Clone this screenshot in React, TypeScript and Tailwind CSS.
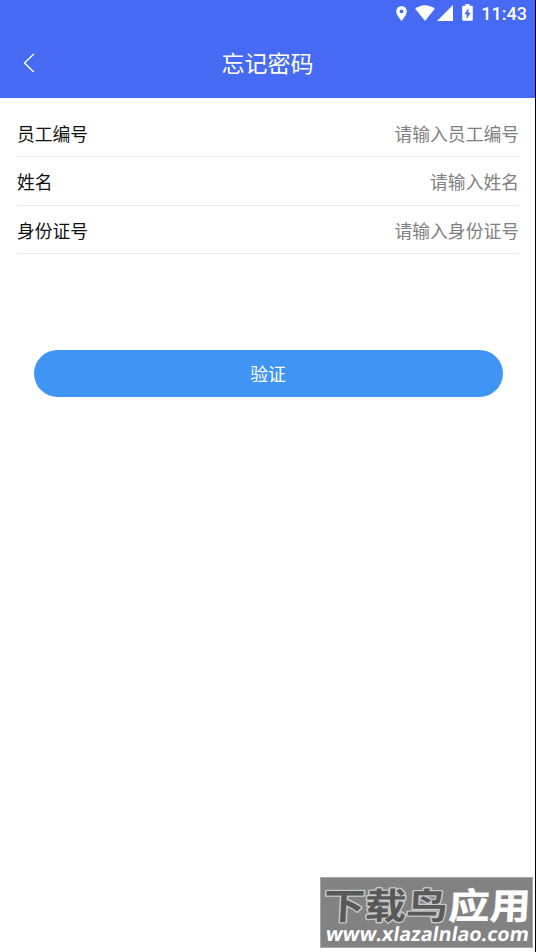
const fields = [
  { name: "employeeNo", label: "员工编号", placeholder: "请输入员工编号" },
  { name: "fullName", label: "姓名", placeholder: "请输入姓名" },
  { name: "idNumber", label: "身份证号", placeholder: "请输入身份证号" },
]

function StatusBar() {
  return (
    <div className="flex h-7 items-start justify-end pr-2 text-white">
      <svg className="mt-[6px] h-[15px] w-[11px]" viewBox="0 0 11 15" fill="currentColor">
        <path
          fillRule="evenodd"
          d="M5.5 0A5.3 5.3 0 0 0 .2 5.3C.2 9.2 5.5 15 5.5 15s5.3-5.8 5.3-9.7A5.3 5.3 0 0 0 5.5 0Zm0 3.4a1.9 1.9 0 1 1 0 3.8 1.9 1.9 0 0 1 0-3.8Z"
        />
      </svg>
      <svg className="mt-[5px] ml-2 h-4 w-5" viewBox="0 0 20 16" fill="currentColor">
        <path d="M10 16 19.8 3.7C17 1.5 13.6.3 10 .3S3 1.500.2 3.700Z" />
      </svg>
      <svg className="mt-[5px] ml-0.5 h-4 w-4" viewBox="0 0 16 16" fill="currentColor">
        <path d="M0 16 16 0v16Z" />
      </svg>
      <svg className="mt-1 ml-[9px] h-[17px] w-[11px]" viewBox="0 0 11 17" fill="currentColor">
        <path
          fillRule="evenodd"
          d="M3.500 0h4v1.700h2.300q1 0 1 1v13.100q0 1-1 1H1.200q-1 0-1-1V2.700q0-1 1-1h2.300ZM6.400 4 2.500 10.300h2.200V15l3.900-6.300H6.400Z"
        />
      </svg>
      <span className="mt-[3px] ml-2 font-['Roboto',sans-serif] text-[18px] leading-[21px] font-medium">11:43</span>
    </div>
  )
}

function Watermark() {
  return (
    <div className="absolute top-[877px] left-[320px] h-[71px] w-[213px] border border-[#a8a8a8] bg-[#828282]">
      <svg className="block h-full w-full overflow-visible" viewBox="0 0 211 69">
        <g
          fontFamily="'Noto Sans CJK SC', sans-serif"
          fontSize="40"
          fontWeight="700"
          strokeLinejoin="round"
          paintOrder="stroke"
          transform="translate(2 41) skewX(-3) scale(1 0.9)"
        >
          <text
            x="0"
            y="0"
            textLength="124"
            lengthAdjust="spacingAndGlyphs"
            fill="#595959"
            stroke="#c8c8c8"
            strokeWidth="3"
          >
            下载鸟
          </text>
          <text
            x="125"
            y="0"
            textLength="82"
            lengthAdjust="spacingAndGlyphs"
            fill="#ffffff"
            stroke="#ffffff"
            strokeWidth="0.5"
          >
            应用
          </text>
        </g>
        <text
          x="0"
          y="0"
          transform="translate(4 63) skewX(-9)"
          textLength="203"
          lengthAdjust="spacingAndGlyphs"
          fontFamily="'Open Sans', sans-serif"
          fontSize="19.5"
          fontWeight="700"
          fill="#ffffff"
        >
          www.xlazalnlao.com
        </text>
      </svg>
    </div>
  )
}

export default function App() {
  return (
    <main className="relative h-[952px] w-[536px] overflow-hidden border-r border-black bg-white font-['Noto_Sans_CJK_SC',sans-serif]">
      <header className="h-[98px] bg-[#466af3] text-white">
        <StatusBar />
        <div className="grid h-[70px] grid-cols-[60px_1fr_60px] items-center">
          <button type="button" aria-label="返回" className="pl-[23px]">
            <svg className="block h-5 w-3" viewBox="0 0 12 20" fill="none" stroke="currentColor" strokeWidth="1.4">
              <path d="M10.800 1 1.500 10l9.300 9" />
            </svg>
          </button>
          <h1 className="pb-0.5 text-center text-[23px] leading-[34px]">忘记密码</h1>
        </div>
      </header>

      <form>
        <div className="pt-[11px] pr-4 pl-[17px]">
          {fields.map((field) => (
            <label
              key={field.name}
              className="flex h-[48.400px] items-center justify-between border-b border-[#e8e8e8] pt-px text-[17.800px] text-[#111111]"
            >
              <span>{field.label}</span>
              <input
                name={field.name}
                placeholder={field.placeholder}
                className="w-60 text-right outline-none placeholder:text-[#808080]"
              />
            </label>
          ))}
        </div>
        <div className="pt-[95.500px] pr-[32.500px] pl-[33.500px]">
          <button
            type="button"
            className="block h-[47px] w-full rounded-full bg-[#4094f3] text-[17.800px] text-white"
          >
            验证
          </button>
        </div>
      </form>

      <Watermark />
    </main>
  )
}
